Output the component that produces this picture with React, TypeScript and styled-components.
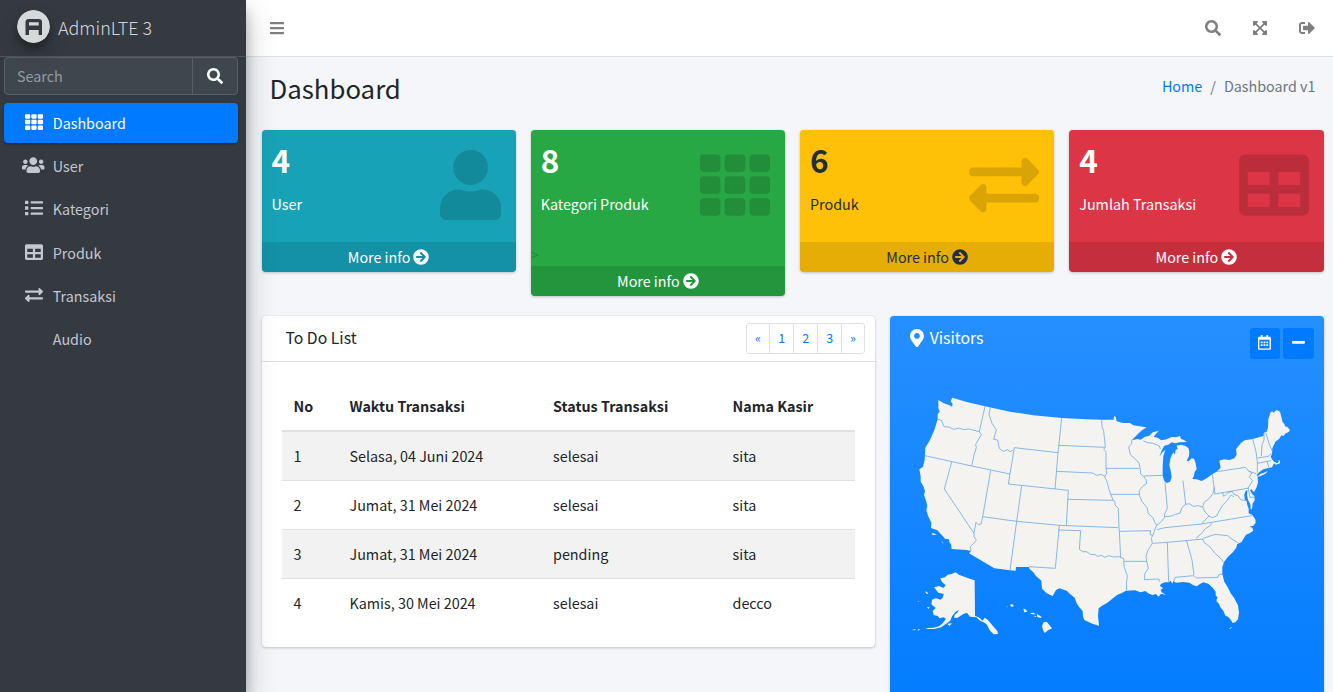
import React from 'react';
import styled, { createGlobalStyle, css } from 'styled-components';
import {
  FaArrowCircleRight,
  FaBars,
  FaExchangeAlt,
  FaExpandArrowsAlt,
  FaList,
  FaMapMarkerAlt,
  FaMinus,
  FaRegCalendarAlt,
  FaSearch,
  FaSignOutAlt,
  FaTable,
  FaTh,
  FaUser,
  FaUsers,
} from 'react-icons/fa';

const size = (px: number) => `${(px * 0.8955).toFixed(2)}px`;

const GlobalStyle = createGlobalStyle`
  *, *::before, *::after { box-sizing: border-box; }
  html, body { height: 100%; margin: 0; overflow: hidden; }
  body {
    font-family: "Noto Sans CJK SC", "Noto Sans", sans-serif;
    font-size: ${size(16)};
    line-height: 24px;
    color: #212529;
    background: #f4f6f9;
  }
  h1, h3, p, ol, ul { margin: 0; padding: 0; }
  ol, ul { list-style: none; }
  a { color: inherit; text-decoration: none; }
  svg { display: block; flex: none; }
`;

/* Glyphs whose drawing is not square take the width of their own view box. */
const UserIcon = styled(FaUser)`
  width: 0.875em;
`;
const UsersIcon = styled(FaUsers)`
  width: 1.25em;
`;
const BarsIcon = styled(FaBars)`
  width: 0.875em;
`;
const ExpandIcon = styled(FaExpandArrowsAlt)`
  width: 0.875em;
`;
const MarkerIcon = styled(FaMapMarkerAlt)`
  width: 0.75em;
`;
const CalendarIcon = styled(FaRegCalendarAlt)`
  width: 0.875em;
`;
const MinusIcon = styled(FaMinus)`
  width: 0.875em;
`;

const Page = styled.div`
  display: flex;
  height: 692px;
  overflow: hidden;
`;

/* ---------- sidebar ---------- */

const Sidebar = styled.aside`
  position: relative;
  z-index: 2;
  flex: 0 0 246px;
  background: #343a40;
  box-shadow: 0 14px 28px rgba(0, 0, 0, 0.25), 0 10px 10px rgba(0, 0, 0, 0.22);
`;

const Brand = styled.a`
  display: flex;
  align-items: center;
  gap: 8px;
  height: 57px;
  padding: 0 0 3px 17px;
  border-bottom: 1px solid #4b545c;
`;

const BrandLogo = styled.svg`
  width: 33px;
  height: 33px;
  border-radius: 50%;
  box-shadow: 0 10px 20px rgba(0, 0, 0, 0.19), 0 6px 6px rgba(0, 0, 0, 0.23);
`;

const BrandName = styled.span`
  font-size: ${size(20)};
  font-weight: 300;
  line-height: 30px;
  color: rgba(255, 255, 255, 0.8);
`;

const SidebarSearch = styled.div`
  display: flex;
  height: 38px;
  margin: 0 8px 8px 4px;
  border: 1px solid #56606a;
  border-radius: 4px;
  background: #3f474e;
`;

const SearchInput = styled.input`
  flex: 1;
  min-width: 0;
  padding: 0 12px;
  border: 0;
  outline: 0;
  background: transparent;
  font: inherit;
  color: #fff;
  &::placeholder { color: #939ba2; opacity: 1; }
`;

const SearchButton = styled.button`
  display: flex;
  align-items: center;
  justify-content: center;
  width: 45px;
  padding: 0;
  border: 0;
  border-left: 1px solid #56606a;
  background: transparent;
  color: #fff;
  font-size: 16px;
`;

const NavList = styled.ul`
  display: flex;
  flex-direction: column;
  gap: 3.2px;
  padding: 0 8px 0 4px;
`;

const NavLink = styled.a<{ $active?: boolean }>`
  display: flex;
  align-items: center;
  height: 40px;
  padding-left: 16.8px;
  border-radius: 4px;
  color: #c2c7d0;
  ${(p) =>
    p.$active &&
    css`
      color: #fff;
      background: #007bff;
      box-shadow: 0 1px 3px rgba(0, 0, 0, 0.12), 0 1px 2px rgba(0, 0, 0, 0.24);
    `}
`;

const NavIcon = styled.span`
  display: flex;
  justify-content: center;
  width: 25.6px;
  margin-right: 6.4px;
  padding-bottom: 2px;
  font-size: 18px;
`;

/* ---------- main column ---------- */

const Main = styled.div`
  flex: 1;
  min-width: 0;
`;

const TopBar = styled.header`
  display: flex;
  align-items: center;
  justify-content: space-between;
  height: 57px;
  padding: 0 18px 0 24px;
  border-bottom: 1px solid #dee2e6;
  background: #fff;
  color: rgba(0, 0, 0, 0.5);
  font-size: 16px;
`;

const TopActions = styled.div`
  display: flex;
  align-items: center;
  gap: 32px;
`;

const ContentHeader = styled.div`
  display: flex;
  justify-content: space-between;
  height: 72.6px;
  padding: 14px 17.5px 0 23.5px;
`;

const PageTitle = styled.h1`
  font-size: ${size(28.8)};
  font-weight: 400;
  line-height: 34.5px;
`;

const Breadcrumb = styled.ol`
  display: flex;
  gap: 8px;
  padding-top: 3px;
  color: #6c757d;
  a { color: #007bff; }
`;

const Content = styled.section`
  padding: 0 9.5px 0 15.5px;
`;

const StatRow = styled.div`
  display: grid;
  grid-template-columns: repeat(4, 1fr);
  align-items: start;
  gap: 15px;
  margin-bottom: 20px;
`;

const StatBox = styled.div<{ $bg: string; $fg: string }>`
  position: relative;
  border-radius: 4px;
  background: ${(p) => p.$bg};
  color: ${(p) => p.$fg};
  box-shadow: 0 0 1px rgba(0, 0, 0, 0.125), 0 1px 3px rgba(0, 0, 0, 0.2);
`;

const StatInner = styled.div`
  height: 112.2px;
  padding: 8.2px 10px 10px;
`;

const StatValue = styled.h3`
  margin-bottom: 11.8px;
  font-size: ${size(35.2)};
  font-weight: 700;
  line-height: 42.2px;
`;

const StatIcon = styled.div`
  position: absolute;
  top: 20px;
  right: 15px;
  font-size: 70px;
  color: rgba(0, 0, 0, 0.15);
`;

const StrayMark = styled.div`
  height: 24px;
  color: rgba(0, 0, 0, 0.25);
  font-weight: 300;
`;

const StatFooter = styled.a`
  display: flex;
  align-items: center;
  justify-content: center;
  gap: 3px;
  height: 30px;
  border-radius: 0 0 4px 4px;
  background: rgba(0, 0, 0, 0.1);
  svg { font-size: 16px; }
`;

const Panels = styled.div`
  display: grid;
  grid-template-columns: 613.25px 433.75px;
  align-items: start;
  gap: 15px;
`;

const Card = styled.div`
  height: 331.2px;
  border-radius: 4px;
  background: #fff;
  box-shadow: 0 0 1px rgba(0, 0, 0, 0.125), 0 1px 3px rgba(0, 0, 0, 0.2);
`;

const CardHeader = styled.div`
  display: flex;
  align-items: center;
  justify-content: space-between;
  height: 46px;
  padding: 0 10px 0 24px;
  border-bottom: 1px solid rgba(0, 0, 0, 0.125);
`;

const CardTitle = styled.h3`
  padding-bottom: 2px;
  font-size: ${size(17.6)};
  font-weight: 400;
  line-height: 21px;
`;

const Pagination = styled.ul`
  display: flex;
  height: 31px;
  border: 1px solid #dee2e6;
  border-radius: 3px;
  font-size: ${size(14)};
  color: #007bff;
  li {
    display: flex;
    align-items: center;
    justify-content: center;
    width: 24px;
  }
  li:first-child, li:last-child { width: 22.5px; }
  li + li { border-left: 1px solid #dee2e6; }
`;

const TableWrap = styled.div`
  padding: 20px;
`;

const Table = styled.table`
  width: 100%;
  table-layout: fixed;
  border-collapse: collapse;
  th, td {
    padding: 12px;
    text-align: left;
    border-top: 1px solid #dee2e6;
  }
  th {
    border-top: 0;
    border-bottom: 2px solid #dee2e6;
    font-weight: 700;
  }
  tbody tr:nth-child(odd) { background: rgba(0, 0, 0, 0.05); }
`;

const MapCard = styled.div`
  height: 420px;
  border-radius: 4px;
  background: linear-gradient(180deg, #268fff, #007bff);
  box-shadow: 0 0 1px rgba(0, 0, 0, 0.125), 0 1px 3px rgba(0, 0, 0, 0.2);
  color: #fff;
`;

const MapHeader = styled.div`
  display: flex;
  justify-content: space-between;
  height: 64px;
  padding: 12px 10px 0 20px;
`;

const MapTitle = styled.h3`
  display: flex;
  align-items: center;
  gap: 6px;
  height: 20px;
  font-size: ${size(17.6)};
  font-weight: 400;
  svg { font-size: 18.5px; }
`;

const MapTools = styled.div`
  display: flex;
  gap: 3px;
`;

const ToolButton = styled.button`
  display: flex;
  align-items: center;
  justify-content: center;
  width: 30.5px;
  height: 31px;
  padding: 0 0 1px;
  border: 0;
  border-radius: 3px;
  background: #007bff;
  color: #fff;
  font-size: 14.8px;
`;

const UsMap = styled.svg`
  width: 424px;
  height: 280px;
  margin-left: 10px;
`;

const Land = styled.path`
  fill: #f4f3f0;
  stroke: none;
`;

const Borders = styled.path`
  fill: none;
  stroke: #69a8ea;
  stroke-width: 2.4;
  stroke-linejoin: round;
`;

const mainland =
  'M115 60L130 69 148 76 156 80 158 72 152 64 157 53 200 66 255 79 330 95 400 106 485 114 560 118 605 119 641 119 642 109 647 110 650 124 668 129 690 129 700 136 718 139 740 142 724 152 710 166 695 181 712 177 722 179 735 170 748 167 758 157 776 152 768 161 761 170 772 173 784 181 800 178 815 171 828 172 840 168 843 177 852 180 860 186 838 187 826 190 815 187 805 194 793 197 786 210 778 230 788 216 796 210 790 228 788 260 788 288 793 303 800 309 810 305 815 292 812 272 808 255 811 236 817 222 821 217 824 224 827 210 833 207 830 197 842 194 855 197 865 204 868 215 867 228 860 242 866 244 875 235 882 236 887 250 890 268 884 275 882 287 877 297 890 298 905 303 920 295 937 282 950 275 962 263 958 242 972 238 988 240 1003 235 1010 224 1008 208 1022 190 1034 181 1058 177 1090 168 1092 158 1100 155 1104 142 1105 118 1111 98 1116 94 1120 98 1130 90 1140 95 1148 127 1153 132 1155 139 1162 141 1170 150 1166 156 1157 160 1150 168 1144 166 1138 176 1126 185 1117 205 1116 222 1112 230 1116 238 1122 245 1132 250 1137 244 1134 240 1139 241 1140 250 1128 254 1122 250 1116 262 1105 264 1090 268 1077 277 1071 284 1073 292 1074 308 1069 323 1062 337 1054 328 1050 331 1056 342 1063 348 1064 362 1058 370 1056 388 1052 388 1051 373 1044 360 1041 345 1042 330 1037 333 1033 343 1034 358 1040 364 1042 375 1046 386 1046 400 1056 404 1066 418 1067 428 1060 437 1048 440 1057 443 1060 452 1050 459 1038 464 1030 477 1025 486 1012 492 1008 505 997 518 984 530 972 546 967 562 967 582 973 605 983 622 992 640 1003 655 1014 676 1017 698 1014 718 1007 726 998 729 991 718 984 710 976 707 970 692 960 680 957 671 949 663 952 652 947 646 947 635 938 623 925 611 910 607 900 612 890 619 880 616 868 608 850 606 828 608 820 603 817 611 812 602 807 607 795 607 784 611 779 617 789 624 782 630 785 637 797 644 783 641 776 650 768 642 757 645 744 640 736 633 722 637 705 631 678 632 664 640 652 644 636 657 622 668 605 678 596 685 594 708 597 737 577 731 553 720 549 710 548 693 538 682 530 670 524 653 510 642 500 632 478 625 468 630 458 648 440 640 426 626 424 602 408 588 400 577 388 566 387 561 348 561 347 572 330 571 283 565 207 520 213 513 200 510 155 507 153 493 148 486 147 478 136 477 125 465 112 451 93 444 94 428 84 407 79 390 82 378 79 365 72 345 75 333 70 318 62 305 62 288 58 268 69 260 74 240 76 203 90 180 103 150 113 118 113 103 119 95 115 84Z';

const islands =
  'M1070 291L1082 281 1090 279 1104 273 1096 281 1082 288ZM95 459L105 461 110 464 98 465ZM124 481L131 491 127 488ZM988 745L998 740 990 747Z';

const alaska =
  'M121 595L135 592 143 584 155 582 167 577 178 585 193 590 209 596 224 601 225 708 236 712 248 722 254 713 264 720 277 736 292 753 294 762 281 763 270 752 261 734 250 726 241 723 229 712 210 710 201 698 190 702 181 708 171 714 162 713 164 704 173 697 176 690 166 696 156 709 151 722 136 733 124 742 102 747 76 747 84 744 100 743 117 739 128 730 138 716 130 712 119 715 113 708 101 705 98 693 107 684 94 673 96 659 108 655 122 659 129 652 131 642 115 638 102 622 118 618 130 624 137 616 126 606ZM142 731L156 730 148 738ZM76 634L82 637 85 643 78 640ZM81 681L89 682 85 687ZM54 663L58 664 56 666ZM35 750L48 747 45 751ZM53 748L61 748 55 752Z';

const hawaii =
  'M319 681L324 679 322 682ZM330 675L336 672 342 678 335 681ZM370 686L376 687 382 695 373 697ZM389 700L401 698 407 703 396 703ZM402 707L409 708 405 712ZM410 701L425 711 422 714 412 711ZM431 727L440 725 448 735 456 745 444 751 434 759 429 751 426 738Z';

const westBorders =
  'M255 79L238 155 244 164 227 193 229 203 222 225 215 258M113 118L124 121 132 140 147 141 161 148 177 144 190 149 206 147 238 155M75 227L215 258 330 282M155 246L133 327 222 460M222 460L222 470 229 480 219 492 211 500 213 513M272 271L248 410 243 432 235 434 228 427 222 460M271 82L267 103 276 130 289 150 281 178 293 180 298 205 310 214 323 209 330 215 338 211M343 203L474 218M343 203L325 312 505 331M485 114L474 218 465 327M477 196L615 202M470 274L578 279 590 286 603 283 616 290M503 358L640 361M365 317L350 424M505 331L499 436M248 410L350 424 478 436M478 436L655 443M350 424L330 571M478 436L466 565 387 560M475 450L542 452 538 508 548 515 560 515 571 523 585 524 593 529 605 526 614 532 626 527 640 531 662 530M605 119L606 140 611 154 614 180 616 202 611 208 618 215 618 265M618 265L718 265M618 265L620 280 614 290 621 305 626 325 632 343M632 343L718 343M632 343L640 361 645 365 645 375 655 385 657 443';

const eastBorders =
  'M57 443L58 454 152 452 150 464 158 466M58 454L62 533 71 535 72 544 140 544M71 544L73 562 82 588 80 604 79 632M95 181L95 192 86 200 91 224 104 235 117 249 120 262 122 282 130 288 138 299 140 310 127 320 118 332 118 346 126 365 142 384 145 401 158 412 165 428 170 436 165 447 160 462 154 475 157 490 143 512 138 530 140 544 145 565 135 580 133 599 177 597 178 605M132 288L188 286M195 308L202 385 194 402 193 413 184 425 170 436M249 302L257 373 246 383 240 399 224 404 211 409 195 410M257 373L268 371 280 379 296 377 308 382 315 396 327 408 304 432M308 382L313 366 326 357 339 341 343 320M337 282L345 342 447 324M171 449L195 443 304 432 455 407M335 430L329 438 316 446 304 461 288 475M158 490L202 487 310 477M202 487L206 607M260 483L276 540 282 585M222 603L225 592 282 587 289 594 354 592 357 583 367 583M310 475L345 463 383 467 390 473 413 488M308 477L312 487 331 502 345 520 360 533 371 547M327 408L337 413 350 408 358 392 367 377 381 362 393 345 402 350M367 338L371 349 383 339 396 334 402 343 415 348 422 359 437 362M350 275L437 262 446 273 455 279 448 292 458 302 450 315 444 324 450 352 463 352M446 273L470 282M458 177L468 215 472 245 472 278M492 160L492 180 486 194 484 228M472 234L505 229 514 220M472 250L512 242M502 245L506 261M497 158L507 190 516 212M130 182L141 188 160 190 178 198 181 207';

const UnitedStates = () => (
  <UsMap viewBox="0 0 1272 840" aria-label="United States">
    <Land d={mainland} />
    <Land d={islands} />
    <Land d={alaska} />
    <Land d={hawaii} />
    <Borders d={westBorders} />
    <Borders d={eastBorders} transform="translate(600 0)" />
  </UsMap>
);

const navItems = [
  { label: 'Dashboard', icon: <FaTh />, active: true },
  { label: 'User', icon: <UsersIcon /> },
  { label: 'Kategori', icon: <FaList /> },
  { label: 'Produk', icon: <FaTable /> },
  { label: 'Transaksi', icon: <FaExchangeAlt /> },
  { label: 'Audio', icon: null },
];

const stats = [
  { value: 4, label: 'User', bg: '#17a2b8', fg: '#fff', icon: <UserIcon /> },
  { value: 8, label: 'Kategori Produk', bg: '#28a745', fg: '#fff', icon: <FaTh />, stray: '>' },
  { value: 6, label: 'Produk', bg: '#ffc107', fg: '#1f2d3d', icon: <FaExchangeAlt /> },
  { value: 4, label: 'Jumlah Transaksi', bg: '#dc3545', fg: '#fff', icon: <FaTable /> },
];

const rows = [
  ['1', 'Selasa, 04 Juni 2024', 'selesai', 'sita'],
  ['2', 'Jumat, 31 Mei 2024', 'selesai', 'sita'],
  ['3', 'Jumat, 31 Mei 2024', 'pending', 'sita'],
  ['4', 'Kamis, 30 Mei 2024', 'selesai', 'decco'],
];

export default function App() {
  return (
    <>
      <GlobalStyle />
      <Page>
        <Sidebar>
          <Brand href="#">
            <BrandLogo viewBox="0 0 33 33">
              <circle cx="16.5" cy="16.5" r="16.5" fill="#d6d8d9" />
              <path
                d="M8.500 25V12.200Q8.500 9 11.700 9h10.100Q25 9 25 12.200V25h-3.300v-5h-9.700v5ZM12 12.200v3.300h9.700v-3.300Z"
                fill="#343a40"
                fillRule="evenodd"
              />
            </BrandLogo>
            <BrandName>AdminLTE 3</BrandName>
          </Brand>
          <SidebarSearch>
            <SearchInput placeholder="Search" />
            <SearchButton aria-label="Search">
              <FaSearch />
            </SearchButton>
          </SidebarSearch>
          <NavList>
            {navItems.map((item) => (
              <li key={item.label}>
                <NavLink href="#" $active={item.active}>
                  <NavIcon>{item.icon}</NavIcon>
                  {item.label}
                </NavLink>
              </li>
            ))}
          </NavList>
        </Sidebar>

        <Main>
          <TopBar>
            <BarsIcon />
            <TopActions>
              <FaSearch />
              <ExpandIcon />
              <FaSignOutAlt />
            </TopActions>
          </TopBar>

          <ContentHeader>
            <PageTitle>Dashboard</PageTitle>
            <Breadcrumb>
              <li>
                <a href="#">Home</a>
              </li>
              <li>/</li>
              <li>Dashboard v1</li>
            </Breadcrumb>
          </ContentHeader>

          <Content>
            <StatRow>
              {stats.map((s) => (
                <StatBox key={s.label} $bg={s.bg} $fg={s.fg}>
                  <StatInner>
                    <StatValue>{s.value}</StatValue>
                    <p>{s.label}</p>
                  </StatInner>
                  <StatIcon>{s.icon}</StatIcon>
                  {s.stray && <StrayMark>{s.stray}</StrayMark>}
                  <StatFooter href="#">
                    More info <FaArrowCircleRight />
                  </StatFooter>
                </StatBox>
              ))}
            </StatRow>

            <Panels>
              <Card>
                <CardHeader>
                  <CardTitle>To Do List</CardTitle>
                  <Pagination>
                    {['«', '1', '2', '3', '»'].map((label) => (
                      <li key={label}>{label}</li>
                    ))}
                  </Pagination>
                </CardHeader>
                <TableWrap>
                  <Table>
                    <colgroup>
                      <col width="56" />
                      <col width="203.500" />
                      <col width="179.500" />
                      <col />
                    </colgroup>
                    <thead>
                      <tr>
                        <th>No</th>
                        <th>Waktu Transaksi</th>
                        <th>Status Transaksi</th>
                        <th>Nama Kasir</th>
                      </tr>
                    </thead>
                    <tbody>
                      {rows.map((row) => (
                        <tr key={row[0]}>
                          {row.map((cell, i) => (
                            <td key={i}>{cell}</td>
                          ))}
                        </tr>
                      ))}
                    </tbody>
                  </Table>
                </TableWrap>
              </Card>

              <MapCard>
                <MapHeader>
                  <MapTitle>
                    <MarkerIcon />
                    Visitors
                  </MapTitle>
                  <MapTools>
                    <ToolButton aria-label="Date range">
                      <CalendarIcon />
                    </ToolButton>
                    <ToolButton aria-label="Collapse">
                      <MinusIcon />
                    </ToolButton>
                  </MapTools>
                </MapHeader>
                <UnitedStates />
              </MapCard>
            </Panels>
          </Content>
        </Main>
      </Page>
    </>
  );
}
